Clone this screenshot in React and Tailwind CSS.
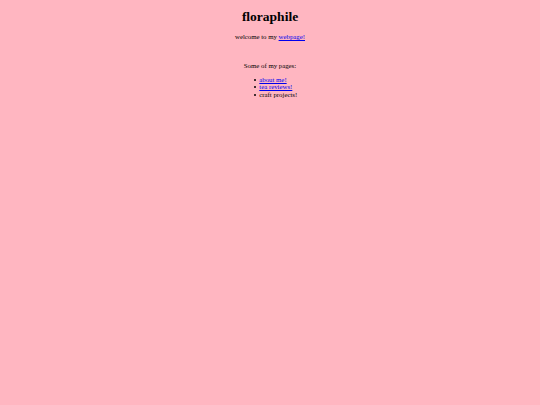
export default function App() {
  const Dot = () => <span className="inline-block w-[2px] h-[2px] rounded-full bg-black mr-[3.5px] shrink-0" />;
  return (
    <div className="min-h-[405px] w-full bg-[#ffb6c1] text-black text-center" style={{ fontFamily: '"Liberation Serif", "Times New Roman", serif' }}>
      <div className="pt-[8px]">
        <h1 className="text-[13.5px] font-bold leading-[17px] m-0">floraphile</h1>
        <p className="text-[6.8px] leading-[9px] mt-[7px]">
          welcome to my <a href="#" className="text-[#0000ee] underline">webpage!</a>
        </p>
        <p className="text-[6.8px] leading-[9px] mt-[20px]">Some of my pages:</p>
        <ul className="inline-block text-left text-[6.8px] mt-[6px] pl-[11px] list-none">
          <li className="flex items-center h-[7.6px]"><Dot /><a href="#" className="text-[#0000ee] underline">about me!</a></li>
          <li className="flex items-center h-[7.6px]"><Dot /><a href="#" className="text-[#0000ee] underline">tea reviews!</a></li>
          <li className="flex items-center h-[7.6px]"><Dot />craft projects!</li>
        </ul>
      </div>
    </div>
  );
}
